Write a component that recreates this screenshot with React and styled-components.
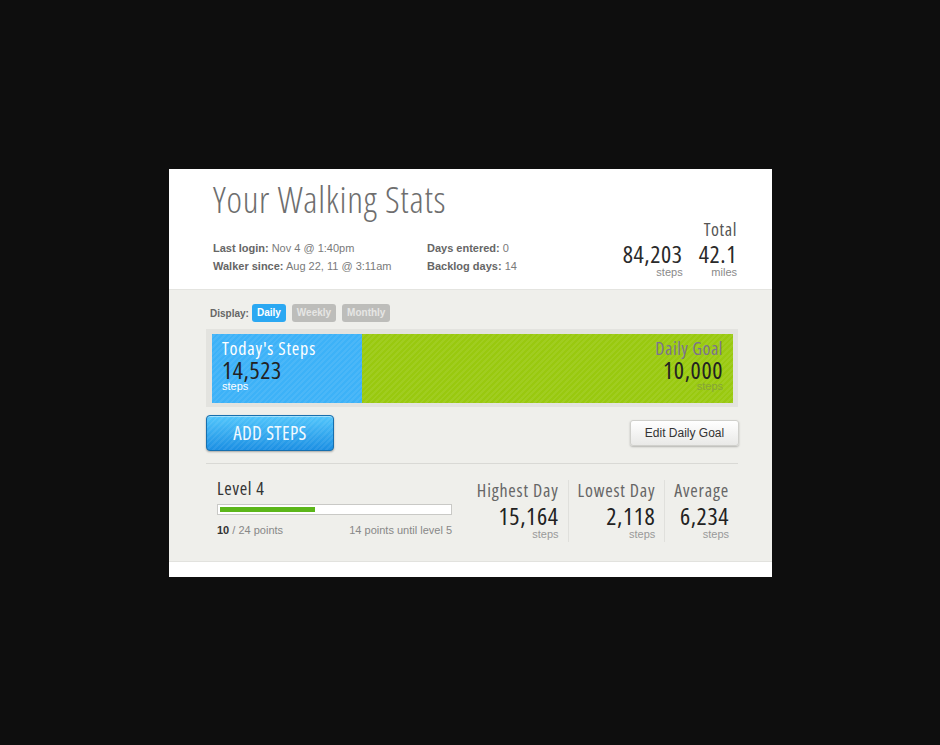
import React from 'react'
import styled, { createGlobalStyle } from 'styled-components'

const cond = `"Open Sans", "Liberation Sans", sans-serif`
const sans = `"Liberation Sans", Arial, Helvetica, sans-serif`

const stats = [
    { label: 'Highest Day', value: '15,164' },
    { label: 'Lowest Day', value: '2,118' },
    { label: 'Average', value: '6,234' },
]

function App() {
    const points = 10
    const total = 24
    return (
        <>
            <GlobalStyle />
            <Card>
                <Header>
                    <HeaderLeft>
                        <Title>Your Walking Stats</Title>
                        <Info>
                            <InfoCol wide>
                                <InfoLine><b>Last login:</b> Nov 4 @ 1:40pm</InfoLine>
                                <InfoLine><b>Walker since:</b> Aug 22, 11 @ 3:11am</InfoLine>
                            </InfoCol>
                            <InfoCol>
                                <InfoLine><b>Days entered:</b> 0</InfoLine>
                                <InfoLine><b>Backlog days:</b> 14</InfoLine>
                            </InfoCol>
                        </Info>
                    </HeaderLeft>
                    <Totals>
                        <TotalTitle>Total</TotalTitle>
                        <TotalRow>
                            <TotalItem>
                                <BigNum>84,203</BigNum>
                                <Unit>steps</Unit>
                            </TotalItem>
                            <TotalItem>
                                <BigNum>42.1</BigNum>
                                <Unit>miles</Unit>
                            </TotalItem>
                        </TotalRow>
                    </Totals>
                </Header>

                <Body>
                    <DisplayRow>
                        <DisplayLabel>Display:</DisplayLabel>
                        <Toggle active>Daily</Toggle>
                        <Toggle>Weekly</Toggle>
                        <Toggle>Monthly</Toggle>
                    </DisplayRow>

                    <BarFrame>
                        <Bar>
                            <TodayPart>
                                <BarLabel>Today's Steps</BarLabel>
                                <BarNum>14,523</BarNum>
                                <BarUnit>steps</BarUnit>
                            </TodayPart>
                            <GoalPart>
                                <BarLabel goal>Daily Goal</BarLabel>
                                <BarNum>10,000</BarNum>
                                <BarUnit goal>steps</BarUnit>
                            </GoalPart>
                        </Bar>
                    </BarFrame>

                    <Actions>
                        <AddButton>ADD STEPS</AddButton>
                        <EditButton>Edit Daily Goal</EditButton>
                    </Actions>

                    <Bottom>
                        <LevelBox>
                            <LevelTitle>Level 4</LevelTitle>
                            <Progress>
                                <ProgressFill style={{ width: `${(points / total) * 100}%` }} />
                            </Progress>
                            <PointsRow>
                                <span><b>{points}</b> / {total} points</span>
                                <span>{total - points} points until level 5</span>
                            </PointsRow>
                        </LevelBox>
                        <StatsRow>
                            {stats.map((s) => (
                                <StatCol key={s.label}>
                                    <StatLabel>{s.label}</StatLabel>
                                    <StatNum>{s.value}</StatNum>
                                    <StatUnit>steps</StatUnit>
                                </StatCol>
                            ))}
                        </StatsRow>
                    </Bottom>
                </Body>
            </Card>
        </>
    )
}

const GlobalStyle = createGlobalStyle`
html, body{
    margin: 0;
    padding: 0;
    background: #0e0e0e;
}
body{
    font-family: ${sans};
}
`

const Card = styled.div`
    width: 603px;
    margin: 169px 0 0 169px;
    background: #fff;
    padding-bottom: 15px;
`

const Header = styled.div`
    display: flex;
    justify-content: space-between;
    align-items: flex-end;
    padding: 9px 35px 10px 44px;
    border-bottom: 1px solid #e4e4e0;
`

const HeaderLeft = styled.div`
    display: flex;
    flex-direction: column;
`

const Title = styled.h1`
    margin: 0;
    font-family: ${cond};
    font-weight: 300;
    font-stretch: 75%;
    font-size: 37px;
    line-height: 42px;
    letter-spacing: 0.7px;
    color: #6e6e6e;
`

const Info = styled.div`
    display: flex;
    margin: 19px 0 4px;
`

const InfoCol = styled.div`
    width: ${(p) => (p.wide ? '214px' : 'auto')};
`

const InfoLine = styled.div`
    font-size: 11px;
    line-height: 18px;
    color: #7a7a7a;
    b{
        color: #666;
    }
`

const Totals = styled.div`
    display: flex;
    flex-direction: column;
    align-items: flex-end;
`

const Label = styled.div`
    font-family: ${cond};
    font-stretch: 75%;
    font-size: 18px;
    line-height: 20px;
    letter-spacing: 0.6px;
    white-space: nowrap;
`

const TotalTitle = styled(Label)`
    color: #555;
    margin-bottom: 3px;
`

const TotalRow = styled.div`
    display: flex;
    gap: 16px;
`

const TotalItem = styled.div`
    display: flex;
    flex-direction: column;
    align-items: flex-end;
`

const BigNum = styled.div`
    font-family: ${cond};
    font-stretch: 75%;
    font-size: 24px;
    line-height: 24px;
    letter-spacing: 0.6px;
    color: #2a2a2a;
`

const Unit = styled.div`
    font-size: 11px;
    line-height: 13px;
    color: #8a8a8a;
`

const Body = styled.div`
    background: #efefeb;
    padding: 14px 34px 19px 37px;
    border-bottom: 1px solid #e2e2de;
`

const DisplayRow = styled.div`
    display: flex;
    align-items: center;
    gap: 6px;
    padding-left: 4px;
`

const DisplayLabel = styled.span`
    font-size: 10px;
    font-weight: bold;
    color: #666;
    margin-right: -3px;
`

const Toggle = styled.span`
    height: 18px;
    line-height: 18px;
    padding: 0 5px;
    border-radius: 3px;
    font-size: 10px;
    font-weight: bold;
    background: ${(p) => (p.active ? '#2ba8f2' : '#bdbdba')};
    color: ${(p) => (p.active ? '#fff' : '#e6e6e4')};
`

const BarFrame = styled.div`
    margin-top: 7px;
    background: #e3e3df;
    padding: 5px 5px 4px 6px;
`

const Bar = styled.div`
    display: flex;
    height: 69px;
`

const stripes = `repeating-linear-gradient(-45deg, rgba(255,255,255,0.07) 0 2px, transparent 2px 4px)`

const TodayPart = styled.div`
    width: 150px;
    box-sizing: border-box;
    padding: 4px 10px 0;
    background-color: #3db2f8;
    background-image: ${stripes};
    color: #fff;
`

const GoalPart = styled.div`
    flex: 1;
    padding: 4px 10px 0;
    background-color: #99c90f;
    background-image: ${stripes};
    text-align: right;
`

const BarLabel = styled(Label)`
    font-weight: ${(p) => (p.goal ? 400 : 500)};
    letter-spacing: ${(p) => (p.goal ? '0.5px' : '0.8px')};
    color: ${(p) => (p.goal ? '#7c7290' : '#fff')};
`

const BarNum = styled(BigNum)`
    line-height: 22px;
    margin-top: 1px;
    color: #222;
`

const BarUnit = styled.div`
    font-size: 11px;
    line-height: 11px;
    color: ${(p) => (p.goal ? '#86a33a' : '#fff')};
`

const Actions = styled.div`
    display: flex;
    justify-content: space-between;
    align-items: center;
    margin-top: 8px;
    padding-bottom: 12px;
    border-bottom: 1px solid #d9d9d5;
`

const AddButton = styled.button`
    width: 128px;
    height: 36px;
    border: 1px solid #176fae;
    border-radius: 4px;
    background-color: #2aa4ee;
    background-image: ${stripes}, linear-gradient(#52c6fc, #1b8fe3);
    box-shadow: inset 0 1px 0 rgba(255,255,255,0.45), 0 1px 2px rgba(0,0,0,0.3);
    color: #f2faff;
    font-family: ${cond};
    font-stretch: 75%;
    font-size: 19px;
    letter-spacing: 0.4px;
    padding: 0;
    cursor: pointer;
`

const EditButton = styled.button`
    width: 109px;
    height: 26px;
    margin-right: -1px;
    border: 1px solid #d0d0cc;
    border-radius: 3px;
    background: linear-gradient(#ffffff, #e9e9e7);
    box-shadow: 0 1px 2px rgba(0,0,0,0.25);
    font-family: ${sans};
    font-size: 12px;
    color: #333;
    padding: 0;
    cursor: pointer;
`

const Bottom = styled.div`
    display: flex;
    justify-content: space-between;
    align-items: flex-start;
    padding: 14px 9px 0 11px;
`

const LevelBox = styled.div`
    width: 235px;
    flex-shrink: 0;
`

const LevelTitle = styled(Label)`
    font-weight: 500;
    letter-spacing: 0.7px;
    color: #333;
`

const Progress = styled.div`
    margin-top: 6px;
    height: 5px;
    padding: 2px;
    background: #fff;
    border: 1px solid #c9c9c6;
`

const ProgressFill = styled.div`
    height: 100%;
    background: #5cb61a;
`

const PointsRow = styled.div`
    display: flex;
    justify-content: space-between;
    margin-top: 8px;
    font-size: 11px;
    line-height: 14px;
    color: #888;
    b{
        color: #333;
    }
`

const StatsRow = styled.div`
    display: flex;
    margin-top: 2px;
`

const StatCol = styled.div`
    display: flex;
    flex-direction: column;
    align-items: flex-end;
    padding: 0 9px 2px;
    border-left: 1px solid #e0e0dc;
    &:first-child{
        border-left: none;
        padding-left: 0;
    }
    &:last-child{
        padding-right: 0;
    }
`

const StatLabel = styled(Label)`
    letter-spacing: 0.8px;
    color: #666;
`

const StatNum = styled(BigNum)`
    line-height: 22px;
    margin-top: 5px;
    color: #222;
`

const StatUnit = styled.div`
    font-size: 11px;
    line-height: 11px;
    margin-top: 2px;
    color: #999;
`

export default App
